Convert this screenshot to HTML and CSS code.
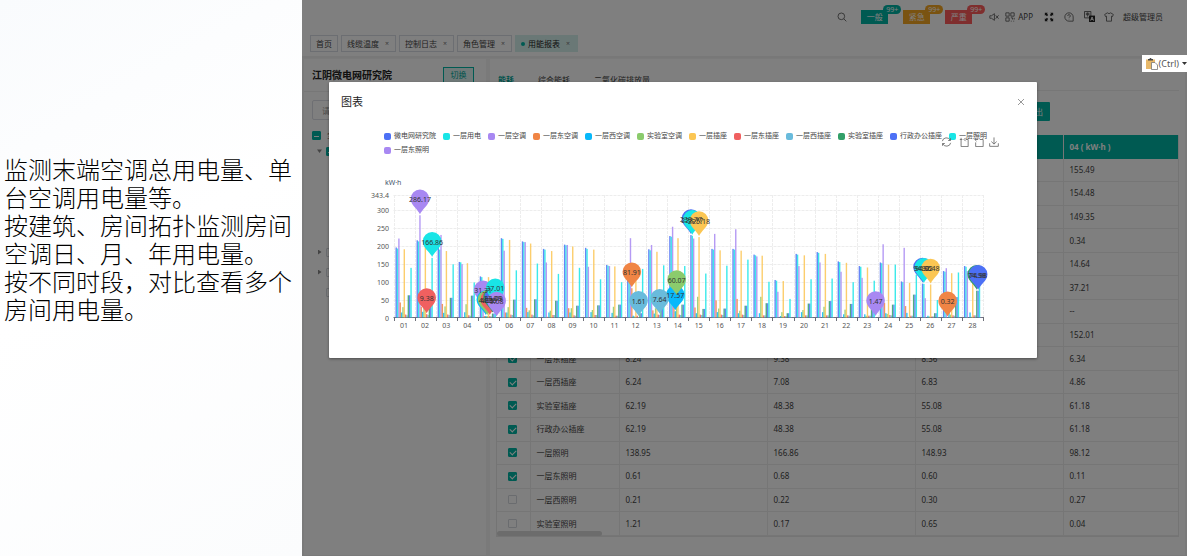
FILE: index.html
```html
<!DOCTYPE html>
<html lang="zh-CN">
<head>
  <meta charset="UTF-8">
  <meta name="viewport" content="width=device-width, initial-scale=1.0">
  <title>用能报表</title>
  <link rel="stylesheet" href="styles.css">
</head>
<body>

  <aside class="intro">
    <p>监测末端空调总用电量、单台空调用电量等。</p>
    <p>按建筑、房间拓扑监测房间空调日、月、年用电量。</p>
    <p>按不同时段，对比查看多个房间用电量。</p>
  </aside>

  <div class="app">
    <header class="topbar">
      <svg class="icon" viewBox="0 0 12 12"><circle cx="5.2" cy="5.2" r="4"/><path d="M8.2 8.2l3 3"/></svg>
      <div class="tags">
        <button class="tag teal">一般<span class="badge">99+</span></button>
        <button class="tag orange">紧急<span class="badge">99+</span></button>
        <button class="tag red">严重<span class="badge">99+</span></button>
      </div>
      <svg class="icon sound" viewBox="0 0 12 12"><path d="M1 4.500h2l3.500-2.500v8L3 7.500H1zM8 4l3.500 4M11.500 4L8 8"/></svg>
      <span class="with-icon"><svg class="icon" viewBox="0 0 12 12"><path d="M1 1h4v4H1zM7 1h4v4H7zM1 7h4v4H1zM7 7h2v2M11 7v2M7 11h1M10 11h1"/></svg>APP</span>
      <svg class="icon full" viewBox="0 0 12 12"><path d="M1 1h3.500L3.600 2 5 3.500 3.500 5 2 3.600 1 4.500zM11 1v3.500L10 3.600 8.500 5 7 3.500 8.400 2 7.500 1zM1 11V7.500L2 8.400 3.500 7 5 8.500 3.600 10 4.500 11zM11 11H7.500L8.400 10 7 8.500 8.500 7 10 8.400 11 7.500z"/></svg>
      <svg class="icon help" viewBox="0 0 12 12"><path d="M11 11H6a5 5 0 1 1 5-5z"/><path d="M4.500 4.800a1.500 1.500 0 1 1 2.200 1.200q-.7.4-.7 1M6 8.200v.6"/></svg>
      <svg class="icon lang" viewBox="0 0 12 12"><path d="M.5.500h7v7h-7zM2 2.500h4M2 4h4M4 1.500V6"/><rect class="solid" x="5.500" y="5" width="6.500" height="7"/><path class="knock" d="M7.200 10.500l1.600-4 1.600 4M7.800 9.200h2"/></svg>
      <svg class="icon" viewBox="0 0 12 12"><path d="M4 1L.8 3l1 2.500L3 5v6h6V5l1.200.5 1-2.500L8 1Q6 3 4 1z"/></svg>
      <span class="user">超级管理员</span>
    </header>

    <nav class="pages">
      <a href="#">首页</a>
      <a href="#">线缆温度<i>×</i></a>
      <a href="#">控制日志<i>×</i></a>
      <a href="#">角色管理<i>×</i></a>
      <a href="#" class="active"><b></b>用能报表<i>×</i></a>
    </nav>

    <div class="content">
      <section class="side">
        <div class="side-head">
          <h2>江阴微电网研究院</h2>
          <button class="switch">切换</button>
        </div>
        <div class="side-body">
          <input class="search" type="text" placeholder="请输入关键字" aria-label="搜索">
          <label class="root"><input class="check part" type="checkbox" checked>全选</label>
          <ul class="tree">
            <li><label><i class="open"></i><input class="check part" type="checkbox" checked>微电网研究院</label></li>
            <li><label class="leaf"><input class="check" type="checkbox" checked>一层用电</label></li>
            <li><label class="leaf"><input class="check" type="checkbox" checked>一层空调</label></li>
            <li><label class="leaf"><input class="check" type="checkbox" checked>一层插座</label></li>
            <li><label class="leaf"><input class="check" type="checkbox" checked>一层照明</label></li>
            <li><label><i></i><input class="check" type="checkbox">二层用电</label></li>
            <li><label><i></i><input class="check" type="checkbox">三层用电</label></li>
            <li><label><i class="none"></i><input class="check" type="checkbox">四层用电</label></li>
          </ul>
        </div>
      </section>

      <main class="report">
        <nav class="kinds">
          <a href="#" class="active">能耗</a>
          <a href="#">综合能耗</a>
          <a href="#">二氧化碳排放量</a>
        </nav>
        <div class="tools"><button class="export">导出</button></div>
        <div class="table-wrap">
          <table>
            <colgroup><col class="c-check"><col class="c-name"><col class="c-val"><col class="c-val"><col class="c-val"><col></colgroup>
            <thead>
              <tr><th></th><th>名称</th><th>01 ( kW·h )</th><th>02 ( kW·h )</th><th>03 ( kW·h )</th><th>04 ( kW·h )</th></tr>
            </thead>
            <tbody id="rows"></tbody>
          </table>
          <div class="scrollbar"></div>
        </div>
      </main>
    </div>

    <div class="mask">
      <div class="modal" role="dialog" aria-labelledby="modalTitle">
        <div class="modal-head">
          <h3 id="modalTitle">图表</h3>
          <button class="close" aria-label="关闭"><svg viewBox="0 0 8 8"><path d="M1 1l6 6M7 1L1 7"/></svg></button>
        </div>
        <div class="chart">
          <ul class="legend" id="legend"></ul>
          <div class="toolbox">
            <svg viewBox="0 0 12 12"><path d="M1 5a5 5 0 0 1 9.500-1M11 7a5 5 0 0 1-9.500 1M10.800 1.500V4.200H8M1.200 10.500V7.800H4"/></svg>
            <svg viewBox="0 0 12 12"><path d="M4 3H1M2.500 1v10.500h8.500V3H8M8 1L6 3l2 2"/></svg>
            <svg viewBox="0 0 12 12"><path d="M1 3h4M3 1L1 3l2 2M7 3H11v8.500H2V6.500"/></svg>
            <svg viewBox="0 0 12 12"><path d="M6 .5v8M2.800 5.500L6 8.500l3.200-3M.8 7.500v3.700h10.400V7.500"/></svg>
          </div>
          <svg class="plot" id="plot" viewBox="0 0 708 160"></svg>
        </div>
      </div>
    </div>

    <button class="paste">
      <svg viewBox="0 0 12 12"><rect x="0" y="1.500" width="9" height="9.500" fill="#e8b96a"/><path d="M2 2.500V1h1.500a1 1 0 0 1 2 0H7v1.500z" fill="#444"/><path d="M5.500 4.500h3.500l2.500 2.500v4.500h-6z" fill="#fff" stroke="#777" stroke-width=".8"/></svg>
      (Ctrl)<i></i>
    </button>
  </div>

  <script src="script.js"></script>
</body>
</html>
```

FILE: styles.css
```css
* {
  box-sizing: border-box;
}

body {
  margin: 0;
  min-height: 100vh;
  display: flex;
  font-family: "Noto Sans", "Noto Sans CJK SC", sans-serif;
  font-size: 8px;
  line-height: 12px;
  color: #444;
}

h2, h3, p, ul {
  margin: 0;
  padding: 0;
}

ul {
  list-style: none;
}

a {
  color: inherit;
  text-decoration: none;
}

i {
  font-style: normal;
}

button, input {
  font: inherit;
  color: inherit;
}

/* left text */
.intro {
  flex: 0 0 302px;
  padding: 155px 4px 0;
  background: linear-gradient(150deg, #f9fbfd, #fff 45%, #fbfcfd);
  font-family: "Noto Sans CJK SC", sans-serif;
  font-weight: 300;
  font-size: 24px;
  line-height: 28px;
  color: #000;
}

/* app */
.app {
  position: relative;
  flex: 1;
  min-width: 0;
  display: flex;
  flex-direction: column;
  background: #fff;
}

.topbar {
  height: 33px;
  padding-right: 24px;
  display: flex;
  align-items: center;
  justify-content: flex-end;
}

.icon {
  width: 10px;
  height: 10px;
  fill: none;
  stroke: #555;
  stroke-width: 1;
}

.icon.full {
  fill: #222;
  stroke: none;
}

.icon .solid {
  fill: #222;
  stroke: none;
}

.icon .knock {
  stroke: #fff;
}

.tags {
  display: flex;
  gap: 15px;
  margin: 0 17px 0 14px;
}

.tag {
  position: relative;
  width: 27px;
  height: 14px;
  padding: 0;
  border: none;
  color: #fff;
  background: var(--tone);
}

.teal { --tone: #00b5a5; }
.orange { --tone: #f5a623; }
.red { --tone: #ff5c5c; }

.badge {
  position: absolute;
  top: -5px;
  left: 22px;
  height: 9px;
  padding: 0 3px;
  border-radius: 5px;
  background: var(--tone);
  font-size: 7px;
  line-height: 9px;
}

.with-icon {
  display: flex;
  align-items: center;
  gap: 3px;
  margin: 0 11px 0 6px;
}

.help, .lang {
  margin-left: 10px;
}

.lang {
  width: 11px;
  height: 11px;
  margin-right: 9px;
}

.user {
  margin-left: 9px;
}

.pages {
  display: flex;
  gap: 3px;
  padding: 2px 8px 4px;
  border-bottom: 2px solid #f0f0f0;
}

.pages a {
  display: flex;
  align-items: center;
  height: 17px;
  padding: 0 5px;
  border: 1px solid #d8dce5;
}

.pages a.active {
  padding: 0 6px 0 5px;
  border-color: #d5f0ed;
  background: #d5f0ed;
  color: #222;
}

.pages b {
  width: 4px;
  height: 4px;
  margin-right: 3px;
  border-radius: 50%;
  background: #00b5a5;
}

.pages i {
  margin-left: 5px;
  padding: 0 1px;
  font-size: 7px;
  color: #777;
}

.content {
  flex: 1;
  display: flex;
  gap: 4px;
  padding: 1px 2px 1px;
  background: #f4f4f4;
}

.side {
  flex: 0 0 182px;
  background: #fff;
}

.side-head {
  display: flex;
  align-items: center;
  justify-content: space-between;
  height: 33px;
  padding: 0 12px 0 8px;
  border-bottom: 1px solid #eee;
}

.side-head h2 {
  font-size: 10px;
  line-height: 14px;
  color: #222;
}

.switch {
  width: 31px;
  height: 17px;
  padding: 0;
  border: 1px solid #00b5a5;
  background: #e0f5f3;
  color: #00a597;
}

.side-body {
  padding: 8px;
}

.search {
  display: block;
  width: 100%;
  height: 20px;
  padding: 0 9px;
  border: 1px solid #dcdfe6;
  border-radius: 2px;
}

.search::placeholder {
  color: #999;
}

.root {
  display: flex;
  align-items: center;
  gap: 6px;
  height: 16px;
  margin-top: 7px;
}

.tree label {
  display: flex;
  align-items: center;
  gap: 4px;
  height: 20px;
  padding-left: 5px;
}

.tree li:first-child label {
  height: 16px;
  margin-bottom: 3px;
}

.tree .leaf {
  padding-left: 26px;
}

.tree i {
  width: 5px;
  height: 5px;
  background: #888;
  clip-path: polygon(20% 0, 90% 50%, 20% 100%);
}

.tree i.open {
  clip-path: polygon(0 20%, 100% 20%, 50% 90%);
}

.tree i.none {
  visibility: hidden;
}

.check {
  appearance: none;
  display: block;
  width: 9px;
  height: 9px;
  margin: 0;
  border: 1px solid #d5d8de;
  border-radius: 1px;
  background: #fff;
}

.check:checked {
  border-color: #00b5a5;
  background: #00b5a5;
}

.check:checked::after {
  content: "";
  display: block;
  width: 5px;
  height: 3px;
  margin: 1px;
  border: solid #fff;
  border-width: 0 0 1px 1px;
  transform: rotate(-45deg);
}

.check.part:checked::after {
  height: 1px;
  margin: 3px 1px;
  border-width: 0 0 1px;
  transform: none;
}

.report {
  flex: 1;
  min-width: 0;
  padding: 0 6px 18px;
  background: #fff;
}

.kinds {
  display: flex;
  gap: 24px;
  height: 32px;
  padding: 15px 2px 0;
  border-bottom: 1px solid #eee;
}

.kinds a.active {
  color: #00a597;
  font-weight: bold;
}

.tools {
  display: flex;
  justify-content: flex-end;
  padding: 11px 129px 14px 0;
}

.export {
  width: 30px;
  height: 19px;
  padding: 0;
  border: none;
  border-radius: 1px;
  background: #00b5a5;
  color: #fff;
}

.table-wrap {
  position: relative;
  border: solid #e8e8e8;
  border-width: 0 1px 1px;
}

table {
  width: 100%;
  height: 401px;
  table-layout: fixed;
  border-collapse: collapse;
}

.c-check { width: 33px; }
.c-name { width: 89px; }
.c-val { width: 148px; }

th, td {
  padding: 0 6px;
  text-align: left;
  border-right: 1px solid #ececec;
}

td {
  border-bottom: 1px solid #ececec;
}

th:last-child, td:last-child {
  border-right: none;
}

th {
  height: 24px;
  background: #00b5a5;
  color: #fff;
}

td .check {
  margin-left: 5px;
}

.scrollbar {
  position: absolute;
  left: 0;
  bottom: 0;
  width: 105px;
  height: 5px;
  border-radius: 3px;
  background: #d8d8d8;
}

/* modal */
.mask {
  position: absolute;
  inset: 0;
  padding-top: 82px;
  background: rgba(0, 0, 0, 0.5);
}

.modal {
  width: 80%;
  margin-left: 27px;
  padding-bottom: 23px;
  border-radius: 1px;
  background: #fff;
  box-shadow: 0 1px 3px rgba(0, 0, 0, 0.4);
}

.modal-head {
  display: flex;
  align-items: center;
  justify-content: space-between;
  padding: 12px 12px 0;
}

.modal-head h3 {
  font-size: 11px;
  font-weight: normal;
  line-height: 16px;
  color: #222;
}

.close {
  padding: 0;
  width: 8px;
  height: 12px;
  border: none;
  background: none;
}

.close svg {
  display: block;
  width: 8px;
  fill: none;
  stroke: #999;
}

.chart {
  position: relative;
  padding-top: 19px;
  font-size: 7px;
}

.legend {
  display: flex;
  flex-wrap: wrap;
  column-gap: 7px;
  padding: 0 40px 0 55px;
  line-height: 14px;
}

.legend li {
  display: flex;
  align-items: center;
  gap: 3px;
}

.legend i {
  width: 7px;
  height: 7px;
  border-radius: 2px;
}

.toolbox {
  position: absolute;
  top: 27px;
  right: 38px;
  display: flex;
  gap: 5px;
}

.toolbox svg {
  width: 10px;
  height: 10px;
  fill: none;
  stroke: #666;
}

.toolbox svg:first-child {
  width: 11px;
  margin-right: 2px;
}

.plot {
  display: block;
  width: 100%;
  margin-top: 18px;
}

.plot text {
  font-size: 7px;
  fill: #555;
}

.plot .unit {
  fill: #46566e;
}

.plot .grid {
  stroke: #ededed;
  stroke-dasharray: 3 1;
}

.plot .axis {
  stroke: #6e7079;
}

.plot .pin-text {
  fill: #333;
  text-anchor: middle;
}

/* paste button over the page */
.paste {
  position: absolute;
  top: 55px;
  right: 0;
  display: flex;
  align-items: center;
  gap: 1px;
  height: 17px;
  padding: 0 0 0 4px;
  border: none;
  background: #fff;
  font-size: 9px;
  color: #555;
}

.paste svg {
  width: 12px;
  height: 12px;
}

.paste i {
  width: 5px;
  height: 3px;
  margin-left: 2px;
  background: #333;
  clip-path: polygon(0 0, 100% 0, 50% 100%);
}
```

FILE: script.js
```js
const series = [
  ['微电网研究院', '#4c70f5'],
  ['一层用电', '#19e5e6'],
  ['一层空调', '#a888f2'],
  ['一层东空调', '#f08545'],
  ['一层西空调', '#08b8fa'],
  ['实验室空调', '#8bcb6c'],
  ['一层插座', '#fbc653'],
  ['一层东插座', '#f06060'],
  ['一层西插座', '#69bbdc'],
  ['实验室插座', '#329f68'],
  ['行政办公插座', '#4c70f5'],
  ['一层照明', '#19e5e6'],
  ['一层东照明', '#a888f2']
];

// one line per day, in the order of the series
const days = [
  [196, 193, 221, 42, 14, 29, 191, 8.24, 6.24, 62.19, 62.19, 138.95, 0.61],
  [216, 213, 286.17, 30, 16, 40, 208, 9.38, 7.08, 48.38, 48.38, 166.86, 0.68],
  [207, 190, 231, 38, 13, 31, 186, 8.36, 6.83, 55.08, 55.08, 148.93, 0.6],
  [155.49, 154.48, 149.35, 0.34, 14.64, 37.21, 152.01, 6.34, 4.86, 61.18, 61.18, 98.12, 0.11],
  [115, 113, 31.31, 4, 4.33, 4.35, 113, 4.35, 3, 11.09, 11.09, 37.01, 0.08],
  [222, 220, 187, 14, 14, 29, 217, 8, 7, 50, 50, 132, 1],
  [213, 211, 211, 27, 15, 20, 207, 8, 6, 51, 51, 151, 1],
  [192, 190, 154, 2, 14, 19, 186, 7, 7, 47, 47, 122, 1],
  [204, 202, 203, 26, 14, 26, 199, 6, 5, 33, 33, 139, 1],
  [195, 192, 142, 0, 15, 21, 190, 7, 7, 34, 34, 107, 1],
  [147, 145, 144, 0, 13, 30, 143, 5, 5, 36, 36, 99, 1],
  [105, 104, 222, 81.91, 5, 3, 102, 5, 1.61, 12, 12, 136, 1],
  [191, 188, 203, 20, 11, 26, 184, 8, 7.64, 30, 30, 146, 1],
  [228, 226, 254, 40, 17.57, 60.07, 222, 8, 7, 36, 36, 144, 1],
  [230.77, 228.77, 221, 28, 12, 58, 225.18, 8, 7, 24, 24, 123, 1],
  [192, 190, 234, 48, 15, 25, 188, 8, 7, 25, 25, 145, 1],
  [192, 190, 247, 52, 12, 19, 187, 8, 7, 33, 33, 162, 1],
  [176, 174, 171, 0, 12, 58, 173, 6, 6, 40, 40, 100, 1],
  [105, 103, 72, 0, 4, 15, 102, 4, 4, 12, 12, 52, 1],
  [178, 176, 144, 0, 15, 21, 174, 6, 6, 39, 39, 107, 1],
  [183, 181, 154, 0, 15, 30, 178, 6, 6, 46, 46, 109, 1],
  [157, 155, 128, 0, 9, 22, 153, 6, 5, 38, 38, 99, 1],
  [144, 142, 111, 0, 9, 5, 140, 5, 5, 30, 30, 103, 1.47],
  [154, 152, 205, 41, 12, 10, 148, 7, 6, 36, 36, 148, 1],
  [101, 99, 195, 32, 13, 0, 97, 5, 5, 64, 64, 120, 1],
  [94.96, 94.02, 54, 0, 5, 3, 92.48, 3, 3, 12, 12, 49, 1],
  [130, 128, 138, 0.32, 14, 8, 124, 6, 5, 57, 57, 126, 1],
  [144, 142, 130, 0, 14, 2, 110, 6, 6, 74.98, 74.98, 110, 1]
];

// [day, series] of each highest and lowest value
const pins = [
  [15, 0], [26, 0], [15, 1], [26, 1], [2, 2], [5, 2], [12, 3], [27, 3],
  [14, 4], [5, 4], [14, 5], [5, 5], [15, 6], [26, 6], [2, 7], [5, 7],
  [13, 8], [12, 8], [28, 9], [5, 9], [28, 10], [5, 10], [2, 11], [5, 11],
  [23, 12], [5, 12]
];

document.getElementById('legend').innerHTML = series
  .map(([name, color]) => `<li><i style="background: ${color}"></i>${name}</li>`)
  .join('');

function drawPlot() {
  const left = 64.5, right = 654, zero = 142.5;
  const step = (right - left) / days.length;
  const x = (day, s) => left + step * day + 2 + s * 1.35;
  const y = value => zero - value * 0.3573;
  let out = '<text class="unit" x="56" y="10">kW·h</text>';

  [0, 50, 100, 150, 200, 250, 300, 343.4].forEach(v => {
    const gy = Math.round(y(v)) + 0.5;
    if (v) out += `<path class="grid" d="M${left} ${gy}H${right}"/>`;
    out += `<text x="60" y="${gy + 2}" text-anchor="end">${v}</text>`;
  });
  for (let i = 0; i <= days.length; i++) {
    const gx = Math.round(left + step * i) + 0.5;
    out += `<path class="grid" d="M${gx} 20V142"/><path class="axis" d="M${gx} 142v4"/>`;
  }
  out += `<path class="axis" d="M${left} 142.5H${right}"/>`;

  days.forEach((day, d) => {
    day.forEach((v, s) => {
      out += `<rect x="${x(d, s)}" y="${y(v)}" width="1.4" height="${zero - y(v)}" fill="${series[s][1]}" fill-opacity=".85"/>`;
    });
    out += `<text x="${left + step * (d + 0.5)}" y="153" text-anchor="middle">${String(d + 1).padStart(2, '0')}</text>`;
  });

  // labels go above all the pins
  let labels = '';
  pins.forEach(([day, s]) => {
    const px = x(day - 1, s) + 0.7;
    const py = y(days[day - 1][s]);
    out += `<path fill="${series[s][1]}" d="M${px} ${py - 1}C${px - 2} ${py - 6} ${px - 9.3} ${py - 10} ${px - 9.3} ${py - 16.5}a9.3 9.3 0 0 1 18.6 0C${px + 9.3} ${py - 10} ${px + 2} ${py - 6} ${px} ${py - 1}z"/>`;
    labels += `<text class="pin-text" x="${px}" y="${py - 13}">${days[day - 1][s]}</text>`;
  });
  document.getElementById('plot').innerHTML = out + labels;
}

function fillRows() {
  const names = series.map(s => s[0]);
  const rows = names.map((name, s) => [name, true, ...days.slice(0, 4).map(d => d[s].toFixed(2))]);
  rows.splice(6, 0, ['行政办公空调', false, '--', '--', '--', '--']);
  rows.push(['一层西照明', false, '0.21', '0.22', '0.30', '0.27']);
  rows.push(['实验室照明', false, '1.21', '0.17', '0.65', '0.04']);
  document.getElementById('rows').innerHTML = rows.map(([name, on, ...values]) =>
    `<tr><td><input class="check" type="checkbox" aria-label="${name}"${on ? ' checked' : ''}></td><td>${name}</td>` +
    values.map(v => `<td>${v}</td>`).join('') + '</tr>').join('');
}

drawPlot();
fillRows();
```
